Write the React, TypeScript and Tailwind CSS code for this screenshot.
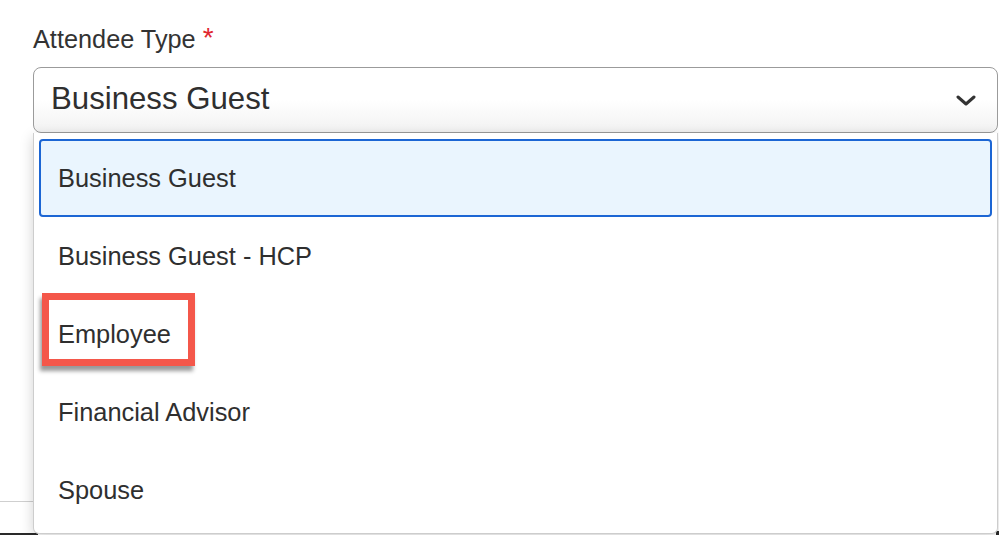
import React from "react";

const items = ["Business Guest", "Business Guest - HCP", "Employee", "Financial Advisor", "Spouse"];

export default function App() {
  return (
    <div className="relative w-[999px] h-[535px] overflow-hidden bg-white font-['Liberation_Sans',Arial,sans-serif] text-[#333]">
      {/* background artefacts behind the menu */}
      <div className="absolute left-0 top-[501px] w-[34px] h-px bg-[#cfcfcf]" />
      <div className="absolute left-0 top-[533px] w-[38px] h-[2px] bg-[#2a2a2a]" />
      <div className="absolute right-0 top-[531px] w-[3px] h-[4px] bg-[#2a2a2a]" />

      <div className="pl-[33px] pt-[25px]">
        <div className="flex items-start text-[25.3px] leading-[29px]">
          <span>Attendee Type</span>
          <span className="ml-[7px] mt-[2px] text-[#e0262e] text-[28px] leading-[22px]">*</span>
        </div>
        <div className="mt-[13px] flex h-[66px] w-[965px] items-center justify-between rounded-[8px] border border-[#9b9b9b] bg-gradient-to-b from-white via-white to-[#f2f2f2] pl-[17px] pr-[20px]">
          <span className="text-[31.2px] leading-[36px] text-[#2f2f2f] -translate-y-[1px]">Business Guest</span>
          <svg width="20" height="11" viewBox="0 0 20 11" className="mr-[1px]">
            <path d="M2 2 L10 9 L18 2" fill="none" stroke="#333" strokeWidth="3" strokeLinecap="round" strokeLinejoin="round" />
          </svg>
        </div>
      </div>

      {/* open menu */}
      <div className="absolute left-[33px] top-[133px] w-[965px] h-[401px] rounded-b-[6px] border border-t-0 border-[#cdcdcd] bg-white px-[5px] pt-[6px] shadow-[0_4px_14px_rgba(0,0,0,0.18)]">
        {items.map((it, i) => (
          <div
            key={it}
            className={
              i === 0
                ? "flex h-[78px] items-center rounded-[4px] border-2 border-[#1c66d4] bg-[#eaf5fe] pl-[17px] text-[25.4px] leading-[29px] text-[#2f2f2f]"
                : "flex h-[78px] items-center pl-[19px] text-[25.4px] leading-[29px] text-[#2f2f2f]"
            }
          >
            {it}
          </div>
        ))}
      </div>

      {/* red highlight annotation */}
      <div className="absolute left-[42px] top-[293px] w-[153px] h-[73px] border-[7px] border-[#f4574a] shadow-[-2px_5px_4px_rgba(0,0,0,0.4)]" />
    </div>
  );
}
